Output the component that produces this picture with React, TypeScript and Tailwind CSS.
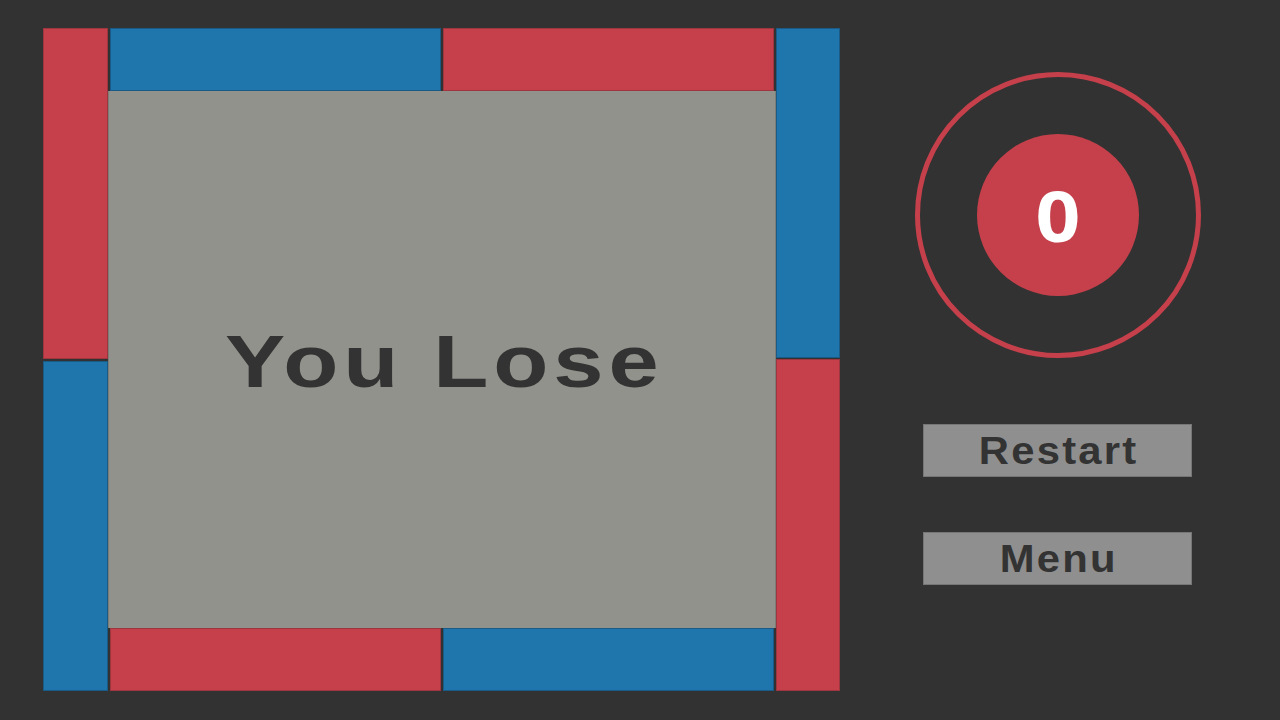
import React from 'react';

const Bar = ({ color, className }: { color: 'red' | 'blue'; className: string }) => (
  <div
    className={
      (color === 'red'
        ? 'bg-[#c5404b] border border-[#9e3640] '
        : 'bg-[#1f76ac] border border-[#1a5a86] ') + className
    }
  />
);

export default function App() {
  return (
    <div className="w-[1280px] h-[720px] bg-[#323232] flex overflow-hidden">
      {/* board */}
      <div className="flex mt-[28px] ml-[43px] h-[663px]">
        <div className="w-[65px] flex flex-col gap-[2px]">
          <Bar color="red" className="h-[331px]" />
          <Bar color="blue" className="h-[330px]" />
        </div>
        <div className="w-[668px] flex flex-col">
          <div className="h-[63px] flex gap-[2px] px-[2px]">
            <Bar color="blue" className="w-[331px] h-full" />
            <Bar color="red" className="w-[331px] h-full" />
          </div>
          <div className="h-[537px] bg-[#92928d] border-x border-[#7d7d78] flex items-center justify-center">
            <span
              className="inline-block text-[74px] font-bold text-[#333333] tracking-[4px] scale-x-[1.22] leading-none pl-[4px] mt-[4px]"
              style={{ fontFamily: '"Liberation Sans", Arial, sans-serif' }}
            >
              You Lose
            </span>
          </div>
          <div className="h-[63px] flex gap-[2px] px-[2px]">
            <Bar color="red" className="w-[331px] h-full" />
            <Bar color="blue" className="w-[331px] h-full" />
          </div>
        </div>
        <div className="w-[64px] flex flex-col gap-[1px]">
          <Bar color="blue" className="h-[330px]" />
          <Bar color="red" className="h-[332px]" />
        </div>
      </div>

      {/* side panel */}
      <div className="flex flex-col ml-[75px] mt-[72px]">
        <div className="w-[286px] h-[286px] rounded-full border-[5px] border-[#c5404b] flex items-center justify-center">
          <div className="w-[162px] h-[162px] rounded-full bg-[#c5404b] flex items-center justify-center">
            <span
              className="inline-block text-white text-[70px] font-bold leading-none scale-x-[1.12]"
              style={{ fontFamily: '"Noto Sans", "Open Sans", sans-serif' }}
            >
              0
            </span>
          </div>
        </div>
        <div
          className="ml-[8px] mt-[66px] flex flex-col gap-[55px]"
          style={{ fontFamily: '"Liberation Sans", Arial, sans-serif' }}
        >
          <button className="w-[269px] h-[53px] bg-[#8f8f8f] border border-[#767676] flex items-center justify-center">
            <span className="inline-block text-[38px] font-bold text-[#333333] tracking-[2px] scale-x-[1.1] leading-none pl-[2px]">
              Restart
            </span>
          </button>
          <button className="w-[269px] h-[53px] bg-[#8f8f8f] border border-[#767676] flex items-center justify-center">
            <span className="inline-block text-[38px] font-bold text-[#333333] tracking-[2px] scale-x-[1.1] leading-none pl-[2px]">
              Menu
            </span>
          </button>
        </div>
      </div>
    </div>
  );
}
